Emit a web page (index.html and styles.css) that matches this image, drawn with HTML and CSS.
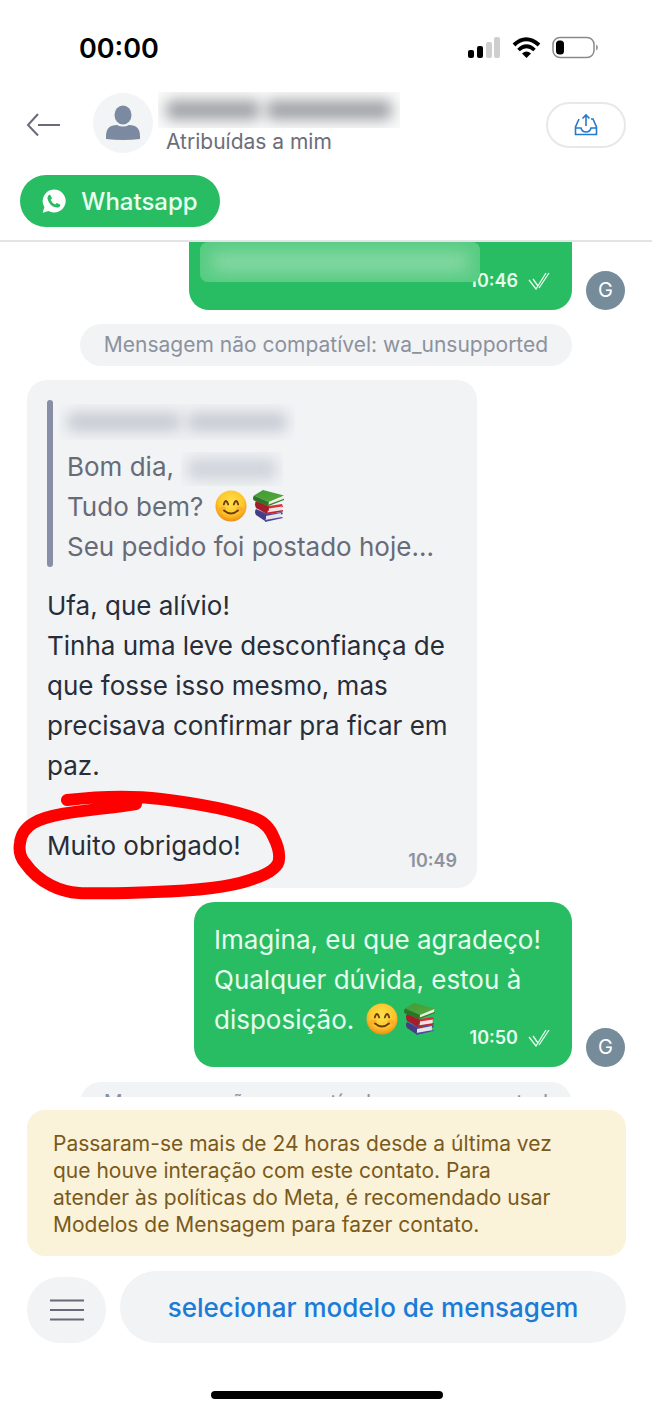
FILE: index.html
```html
<!DOCTYPE html>
<html lang="pt-BR">
<head>
<meta charset="utf-8">
<meta name="viewport" content="width=device-width, initial-scale=1">
<title>Conversa</title>
<link rel="stylesheet" href="styles.css">
</head>
<body>
<svg class="defs" aria-hidden="true">
  <defs>
    <radialGradient id="face" cx="50%" cy="38%" r="62%">
      <stop offset="0" stop-color="#ffe14a"/><stop offset=".65" stop-color="#fdc62c"/><stop offset="1" stop-color="#ef8d12"/>
    </radialGradient>
    <linearGradient id="cover" x1="0" y1="0" x2="1" y2="1">
      <stop offset="0" stop-color="#3f9b35"/><stop offset="1" stop-color="#58a83c"/>
    </linearGradient>
  </defs>
  <symbol id="smile" viewBox="0 0 32 32">
    <circle cx="16" cy="16" r="15.500" fill="url(#face)"/>
    <ellipse cx="7.500" cy="19" rx="3.500" ry="2.500" fill="#f98b2b" opacity=".4"/>
    <ellipse cx="24.500" cy="19" rx="3.500" ry="2.500" fill="#f98b2b" opacity=".4"/>
    <path d="M8.800 14.500q2-7 4.400 0M18.800 14.500q2.400-7 4.400 0M9 20.500q7 6 14 0" fill="none" stroke="#6b3c0c" stroke-width="1.800" stroke-linecap="round"/>
  </symbol>
  <symbol id="books" viewBox="0 0 32 32">
    <path d="M3 19l12 5 14-2 1 2-16 4z" fill="#4c4aa0"/>
    <path d="M3 19q-2 3 0 6l9 6 2-5z" fill="#453c86"/>
    <path d="M13 26l15-3q-1 3 1 5l-16 2.500z" fill="#e7e4ec"/>
    <path d="M12 30l17-3 1 1-18 4z" fill="#4c4aa0"/>
    <path d="M4 11l12 5 13-2 1 3-15 4z" fill="#d8303a"/>
    <path d="M3 11q-2 3 0 7l11 6 2-7z" fill="#a31d2a"/>
    <path d="M16 18.500l13-2q-1 2 0 4l-13 2.500z" fill="#f1e4e4"/>
    <path d="M14 22.500l16-2.500v1.500L14 24.500z" fill="#bd2430"/>
    <path d="M10 0l21 5.500L16 12 1 5.500z" fill="url(#cover)"/>
    <path d="M1 5.500q-2 3 0 5L15 16l1-4z" fill="#2d7428"/>
    <path d="M16 12l14.500-6q-1 2 0 3.500L16 15z" fill="#eef0e4"/>
    <path d="M15 14.800l16-6V10L15 16.300z" fill="#34822d"/>
  </symbol>
  <symbol id="ticks" viewBox="0 0 22 18">
    <path d="M1 8l7 9L18 1M5 7l5 7M11 16L21 1" fill="none" stroke="currentColor" stroke-width="1.300"/>
  </symbol>
</svg>

<div class="app">
  <div class="status">
    <span class="clock">00:00</span>
    <svg class="status-icons" viewBox="0 0 132 24" aria-label="Sinal, Wi-Fi e bateria">
      <rect x="2" y="14" width="6" height="8" rx="2"/>
      <rect x="11" y="10" width="6" height="12" rx="2"/>
      <rect x="20" y="6" width="6" height="16" rx="2" fill="#cfcfcf"/>
      <rect x="28" y="1" width="6" height="21" rx="2" fill="#cfcfcf"/>
      <path d="M48 9q12-11.500 25 0" fill="none" stroke="#000" stroke-width="4"/>
      <path d="M52.500 14q8-7.500 16 0" fill="none" stroke="#000" stroke-width="3.600"/>
      <path d="M56 17.500q4.500-3.800 9 0l-4.500 4.500z"/>
      <rect x="87" y="1.500" width="41" height="20" rx="7" fill="none" stroke="#8a8a8a" stroke-width="1.500"/>
      <rect x="90" y="4.500" width="8" height="14" rx="3.500"/>
      <path d="M130 8.500v6q2-1 2-3t-2-3z" fill="#999"/>
    </svg>
  </div>

  <header class="header">
    <div class="top">
      <button class="icon-button" aria-label="Voltar">
        <svg width="36" height="24" viewBox="0 0 36 24"><path d="M12 1L2 12l10 10.500M12 12h22" fill="none" stroke="#6a6b78" stroke-width="2"/></svg>
      </button>
      <span class="contact-photo">
        <svg width="36" height="36" viewBox="0 0 36 36" fill="#7b8aa0"><ellipse cx="18" cy="10" rx="8.500" ry="9.500"/><path d="M1 34v-3q0-11 11-11 6 3 12 0 11 0 11 11v3q-17 2-34 0z"/></svg>
      </span>
      <div class="contact">
        <span class="redacted redacted-name" aria-label="Nome oculto"><i class="w6"></i><i class="w8"></i></span>
        <span class="assigned">Atribuídas a mim</span>
      </div>
      <button class="share" aria-label="Atribuir conversa">
        <svg width="24" height="24" viewBox="0 0 24 24" fill="none" stroke="#2679cc" stroke-width="1.600"><path d="M5 6L1.500 14v7.500h21V14L19 6h-2M1.500 15H7q1 4 5 4t5-4h5.500M12 13V2M8.500 5.500L12 2l3.500 3.500"/></svg>
      </button>
    </div>
    <button class="channel">
      <svg width="24" height="24" viewBox="0 0 24 24"><path d="M12 .500A11.500 11.500 0 1 1 6.500 22L.700 23.800 2.400 18A11.500 11.500 0 0 1 12 .500z" fill="#fff"/><path d="M8 5.500l2 3.700-1.400 1.700q1.500 3 4.500 4.500l1.800-1.500 3.500 1.800q-.400 3-3.500 2.900-7.500-1.200-9.500-9.200.200-3.300 2.600-3.900z" fill="#29bd63"/></svg>
      <span>Whatsapp</span>
    </button>
  </header>

  <main class="chat">
    <div class="row-out">
      <div class="bubble out continued">
        <span class="patch" aria-label="Texto oculto"></span>
        <span class="meta">10:46 <svg width="22" height="18"><use href="#ticks"/></svg></span>
      </div>
      <span class="agent">G</span>
    </div>

    <p class="notice">Mensagem não compatível: wa_unsupported</p>

    <div class="bubble in">
      <blockquote class="quote">
        <div class="quote-name"><span class="redacted redacted-author" aria-label="Nome oculto"><i class="w8"></i><i class="w7"></i></span></div>
        <div class="line">Bom dia, <span class="redacted redacted-first" aria-label="Nome oculto"><i class="w8"></i></span></div>
        <div class="line">Tudo bem? <span class="emojis"><svg class="emoji" role="img" aria-label="sorriso"><use href="#smile"/></svg><svg class="emoji" role="img" aria-label="livros"><use href="#books"/></svg></span></div>
        <div class="line">Seu pedido foi postado hoje...</div>
      </blockquote>
      <p class="text">Ufa, que alívio!<br>Tinha uma leve desconfiança de que fosse isso mesmo, mas precisava confirmar pra ficar em paz.</p>
      <div class="last thanks">
        <span>Muito obrigado!</span>
        <span class="meta">10:49</span>
        <svg class="scribble" viewBox="0 0 276 112" aria-hidden="true"><path d="M55 11C90 7 125 7 149 10S215 19 242 29Q256 34 262 49Q268 61 267 70Q267 82 238 91C215 99 175 102 142 103S85 105 67 104 27 94 13 74Q6 66 8 54C10 36 27 29 50 25S100 19 124 15"/></svg>
      </div>
    </div>

    <div class="row-out">
      <div class="bubble out">
        <p class="text">Imagina, eu que agradeço!<br>Qualquer dúvida, estou à</p>
        <div class="last">
          <span>disposição. <span class="emojis"><svg class="emoji" role="img" aria-label="sorriso"><use href="#smile"/></svg><svg class="emoji" role="img" aria-label="livros"><use href="#books"/></svg></span></span>
          <span class="meta">10:50 <svg width="22" height="18"><use href="#ticks"/></svg></span>
        </div>
      </div>
      <span class="agent">G</span>
    </div>

    <p class="notice">Mensagem não compatível: wa_unsupported</p>
  </main>

  <footer class="footer">
    <p class="warning">Passaram-se mais de 24 horas desde a última vez que houve interação com este contato. Para atender às políticas do Meta, é recomendado usar Modelos de Mensagem para fazer contato.</p>
    <div class="actions">
      <button class="menu" aria-label="Menu">
        <svg width="34" height="22" viewBox="0 0 34 22"><path d="M0 1.500h34M0 11h34M0 20.500h34" stroke="#686a78" stroke-width="2.200"/></svg>
      </button>
      <button class="template">selecionar modelo de mensagem</button>
    </div>
    <div class="home"></div>
  </footer>
</div>
</body>
</html>
```
FILE: styles.css
```css
* { box-sizing: border-box; }
body {
  margin: 0;
  background: #fff;
  color: #292d38;
  font-family: Inter, "Liberation Sans", sans-serif;
}
p, blockquote { margin: 0; }
button {
  border: 0;
  padding: 0;
  background: none;
  font: inherit;
  color: inherit;
  display: flex;
  align-items: center;
  justify-content: center;
}
.defs { position: absolute; width: 0; height: 0; }
.app {
  height: 100vh;
  display: flex;
  flex-direction: column;
}

.status {
  height: 92px;
  padding: 4px 54px 0 79px;
  display: flex;
  align-items: center;
  justify-content: space-between;
  flex: none;
}
.clock { font-size: 27px; font-weight: 600; color: #000; }
.status-icons { width: 132px; height: 24px; }

.header {
  flex: none;
  padding: 0 26px 13px 20px;
  border-bottom: 2px solid #e3e4e6;
}
.top { display: flex; align-items: center; height: 61px; }
.icon-button { width: 48px; height: 48px; margin-top: 4px; }
.contact-photo {
  width: 60px;
  height: 60px;
  margin-left: 25px;
  border-radius: 50%;
  background: #f2f4f6;
  display: flex;
  align-items: center;
  justify-content: center;
}
.contact { flex: 1; padding: 3px 0 0 13px; display: flex; flex-direction: column; }
.assigned { font-size: 21px; line-height: 28px; color: #6b6e7a; }
.share {
  width: 80px;
  height: 46px;
  margin-top: 4px;
  border: 2px solid #e7e8ea;
  border-radius: 23px;
}
.channel {
  width: 200px;
  height: 52px;
  margin-top: 22px;
  border-radius: 26px;
  background: #29bd63;
  color: #e9fff0;
  font-size: 24px;
  font-weight: 500;
  gap: 15px;
}

.redacted { display: inline-flex; gap: 6px; overflow: hidden; vertical-align: middle; }
.redacted i { background: currentColor; filter: blur(7px); border-radius: 6px; }
.w6 { flex: 6; }
.w7 { flex: 7; }
.w8 { flex: 8; }
.redacted-name { width: 242px; height: 36px; padding: 8px; margin-left: -8px; color: #a0a3a7; background: #fafafa; }
.redacted-author { width: 236px; height: 36px; padding: 8px; margin-left: -8px; color: #c8ccd4; }
.redacted-first { width: 102px; height: 34px; padding: 6px; color: #d0d4db; }

.chat {
  flex: 1 1 0;
  min-height: 0;
  overflow: hidden;
  padding: 0 27px;
  display: flex;
  flex-direction: column;
  gap: 14px;
}
.chat > * { flex: none; }
.row-out { display: flex; justify-content: flex-end; align-items: flex-end; gap: 14px; }
.agent {
  width: 39px;
  height: 39px;
  border-radius: 50%;
  background: #778c9b;
  color: #fff;
  font-size: 20px;
  line-height: 39px;
  text-align: center;
}
.bubble { border-radius: 20px; font-size: 26px; line-height: 40px; }
.out { width: 378px; padding: 18px 20px 19px; background: #29bd63; color: #e6fced; }
.in { width: 450px; padding: 20px 20px 17px; background: #f1f3f5; }
.continued {
  position: relative;
  width: 383px;
  height: 68px;
  border-radius: 0 0 20px 20px;
  display: flex;
  justify-content: flex-end;
  align-items: flex-end;
}
.patch {
  position: absolute;
  left: 11px;
  top: 0;
  width: 280px;
  height: 40px;
  border-radius: 8px;
  background: #58cc83;
  overflow: hidden;
}
.patch::after {
  content: "";
  position: absolute;
  inset: 10px 12px;
  background: #85d8a3;
  filter: blur(8px);
}
.meta {
  display: flex;
  align-items: center;
  gap: 10px;
  font-size: 18px;
  line-height: 20px;
  font-weight: 600;
}
.in .meta { color: #8e929c; }
.out .meta { padding-right: 2px; }
.last { display: flex; justify-content: space-between; min-height: 48px; }
.last .meta { align-self: flex-end; }
.thanks { position: relative; min-height: 45px; margin-top: 40px; }
.scribble {
  position: absolute;
  left: -35px;
  top: -37px;
  width: 276px;
  height: 112px;
  overflow: visible;
  fill: none;
  stroke: #fe0000;
  stroke-width: 12;
  stroke-linecap: round;
  stroke-linejoin: round;
}
.quote {
  position: relative;
  padding-left: 20px;
  margin-bottom: 19px;
  color: #676b77;
}
.quote::before {
  content: "";
  position: absolute;
  inset: 0 auto 0 0;
  width: 6px;
  border-radius: 3px;
  background: #878ea6;
}
.quote-name { height: 47px; line-height: 40px; }
.emojis { display: inline-flex; gap: 6px; margin-left: 4px; vertical-align: -6px; }
.emoji { width: 32px; height: 32px; }
.notice {
  width: 492px;
  height: 42px;
  margin-left: 53px;
  border-radius: 21px;
  background: #f1f3f5;
  color: #8c919c;
  font-size: 21px;
  line-height: 42px;
  text-align: center;
  white-space: nowrap;
}
.notice:last-child { margin-top: 1px; }

.footer { flex: none; padding: 13px 26px 13px 27px; }
.warning {
  padding: 20px 60px 18px 26px;
  border-radius: 18px;
  background: #faf2d9;
  color: #7a5a1c;
  font-size: 21px;
  line-height: 27px;
}
.actions { display: flex; align-items: flex-end; gap: 14px; margin-top: 15px; }
.menu { width: 79px; height: 66px; border-radius: 33px; background: #f1f3f5; }
.template {
  flex: 1;
  height: 72px;
  border-radius: 36px;
  background: #f1f3f5;
  color: #1b7bd6;
  font-size: 26px;
  font-weight: 500;
}
.home { width: 232px; height: 8px; margin: 48px auto 0; border-radius: 4px; background: #000; }
```
